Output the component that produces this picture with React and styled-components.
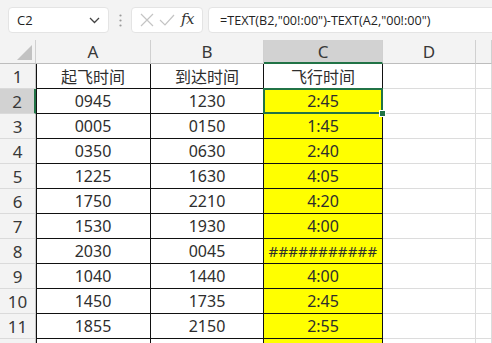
import React from "react";
import styled, { createGlobalStyle, css } from "styled-components";

const Global = createGlobalStyle`
  html, body { margin: 0; padding: 0; background: #ffffff; overflow: hidden; }
  body { font-family: "Noto Sans", "Noto Sans CJK SC", sans-serif; }
`;

const Page = styled.div`
  width: 492px;
  height: 343px;
  display: flex;
  flex-direction: column;
  overflow: hidden;
`;

const Toolbar = styled.div`
  height: 40px;
  flex: none;
  box-sizing: border-box;
  background: #f3f3f3;
  display: flex;
  align-items: flex-start;
  padding: 7px 0 0 8px;
`;

const Box = styled.div`
  height: 26px;
  box-sizing: border-box;
  background: #ffffff;
  border: 1px solid #e4e4e4;
  border-radius: 4px;
  display: flex;
  align-items: center;
`;

const NameBox = styled(Box)`
  width: 101px;
  padding: 0 8px 0 8px;
  justify-content: space-between;
  font-family: "Open Sans", "Noto Sans", sans-serif;
  font-size: 13px;
  color: #222;
`;

const Dots = styled.div`
  width: 22px;
  height: 26px;
  display: flex;
  align-items: center;
  justify-content: center;
`;

const FxBox = styled(Box)`
  width: 72px;
  padding: 0 8px 0 8px;
  justify-content: space-between;
`;

const Fx = styled.span`
  font-family: "DejaVu Serif", "Liberation Serif", serif;
  font-style: italic;
  font-size: 15px;
  color: #333;
  letter-spacing: -0.5px;
  margin-top: -2px;
`;

const FormulaBox = styled(Box)`
  flex: 1;
  margin-left: 5px;
  margin-right: -8px;
  padding-left: 11px;
  font-family: "Open Sans", "Noto Sans", sans-serif;
  font-size: 12.6px;
  color: #222;
  white-space: nowrap;
  border-top-right-radius: 0;
  border-bottom-right-radius: 0;
`;

const Grid = styled.div`
  display: grid;
  grid-template-columns: 36px 115px 113px 119px 93px 1fr;
  grid-auto-rows: 25px;
  grid-template-rows: 24px;
  font-family: "Noto Sans", "Noto Sans CJK SC", sans-serif;
`;

const Corner = styled.div`
  background: #f3f3f3;
  border-right: 1px solid #d0d0d0;
  border-bottom: 1px solid #bdbdbd;
  position: relative;
  box-sizing: border-box;
`;

const Triangle = styled.div`
  position: absolute;
  right: 3px;
  bottom: 3px;
  width: 0;
  height: 0;
  border-left: 15px solid transparent;
  border-bottom: 15px solid #c2c2c2;
`;

const ColHead = styled.div`
  box-sizing: border-box;
  background: ${(p) => (p.$sel ? "#d2d2d2" : "#f3f3f3")};
  border-right: 1px solid #d0d0d0;
  border-bottom: ${(p) => (p.$sel ? "2px solid #217346" : "1px solid #bdbdbd")};
  display: flex;
  align-items: center;
  justify-content: center;
  font-size: 17px;
  color: #383838;
  padding-top: ${(p) => (p.$sel ? "1px" : "0")};
`;

const RowHead = styled.div`
  box-sizing: border-box;
  background: ${(p) => (p.$sel ? "#d2d2d2" : "#f3f3f3")};
  border-right: ${(p) => (p.$sel ? "2px solid #217346" : "1px solid #c6c6c6")};
  border-bottom: 1px solid #dadada;
  display: flex;
  align-items: center;
  justify-content: center;
  font-size: 17px;
  color: #383838;
`;

const Cell = styled.div`
  box-sizing: border-box;
  position: relative;
  border-right: 1px solid ${(p) => (p.$table ? "#111" : "#dcdcdc")};
  border-bottom: 1px solid ${(p) => (p.$table ? "#111" : "#dcdcdc")};
  background: ${(p) => (p.$yellow ? "#ffff00" : "#ffffff")};
  display: flex;
  align-items: center;
  justify-content: center;
  font-size: 16px;
  color: #2e2e2e;
  white-space: nowrap;
  overflow: visible;
  ${(p) => p.$first && css`box-shadow: inset 1px 0 0 #111;`}
  ${(p) => p.$active && css`
    &::after {
      content: "";
      position: absolute;
      left: -1px;
      top: -1px;
      right: -1px;
      bottom: -1px;
      border: 2px solid #217346;
      pointer-events: none;
    }
    &::before {
      content: "";
      position: absolute;
      right: -4px;
      bottom: -4px;
      width: 5px;
      height: 5px;
      background: #217346;
      border: 1px solid #ffffff;
      z-index: 2;
    }
  `}
`;

const Hashes = styled.span`
  letter-spacing: 0.2px;
  font-size: 15px;
`;

const data = [
  ["起飞时间", "到达时间", "飞行时间"],
  ["0945", "1230", "2:45"],
  ["0005", "0150", "1:45"],
  ["0350", "0630", "2:40"],
  ["1225", "1630", "4:05"],
  ["1750", "2210", "4:20"],
  ["1530", "1930", "4:00"],
  ["2030", "0045", "###########"],
  ["1040", "1440", "4:00"],
  ["1450", "1735", "2:45"],
  ["1855", "2150", "2:55"],
  ["", "", ""],
];

export default function App() {
  return (
    <Page>
      <Global />
      <Toolbar>
        <NameBox>
          <span>C2</span>
          <svg width="11" height="7" viewBox="0 0 11 7">
            <path d="M1 1 L5.5 5.5 L10 1" fill="none" stroke="#444" strokeWidth="1.3" />
          </svg>
        </NameBox>
        <Dots>
          <svg width="3" height="13" viewBox="0 0 3 13">
            <circle cx="1.5" cy="1.5" r="1.1" fill="#9a9a9a" />
            <circle cx="1.5" cy="6.5" r="1.1" fill="#9a9a9a" />
            <circle cx="1.5" cy="11.5" r="1.1" fill="#9a9a9a" />
          </svg>
        </Dots>
        <FxBox>
          <svg width="14" height="14" viewBox="0 0 14 14">
            <path d="M1 1 L13 13 M13 1 L1 13" stroke="#c4c4c4" strokeWidth="1.2" fill="none" />
          </svg>
          <svg width="16" height="12" viewBox="0 0 16 12">
            <path d="M1 6 L6 11 L15 1" stroke="#c4c4c4" strokeWidth="1.2" fill="none" />
          </svg>
          <Fx>fx</Fx>
        </FxBox>
        <FormulaBox>=TEXT(B2,"00!:00")-TEXT(A2,"00!:00")</FormulaBox>
      </Toolbar>
      <Grid>
        <Corner>
          <Triangle />
        </Corner>
        {["A", "B", "C", "D", ""].map((c) => (
          <ColHead key={c || "E"} $sel={c === "C"}>
            {c}
          </ColHead>
        ))}
        {data.map((row, i) => (
          <React.Fragment key={i}>
            <RowHead $sel={i === 1}>{i < 11 ? i + 1 : ""}</RowHead>
            {row.map((v, j) => (
              <Cell
                key={j}
                $table
                $first={j === 0}
                $yellow={j === 2 && i > 0}
                $active={i === 1 && j === 2}
              >
                {v.startsWith("#") ? <Hashes>{v}</Hashes> : v}
              </Cell>
            ))}
            <Cell />
            <Cell />
          </React.Fragment>
        ))}
      </Grid>
    </Page>
  );
}
